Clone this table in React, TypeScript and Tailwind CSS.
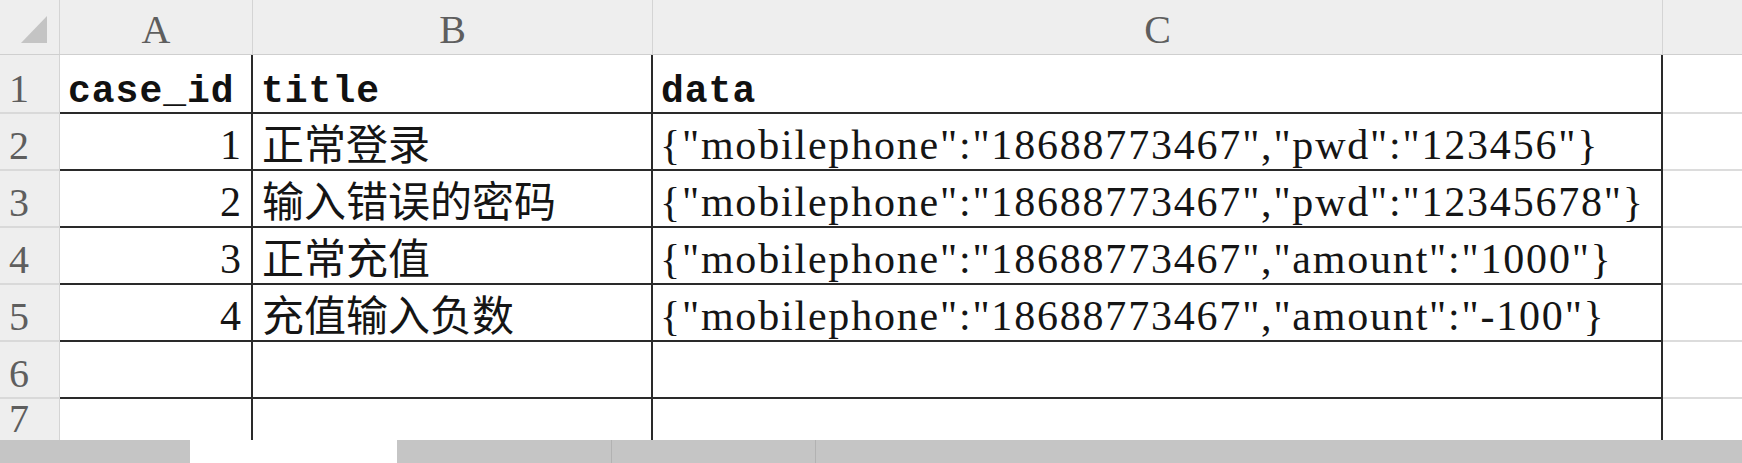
const cols = 'grid grid-cols-[60px_193px_400px_1010px_1fr]'

const rows = [
  { n: '2', id: '1', title: '正常登录', data: '{"mobilephone":"18688773467","pwd":"123456"}' },
  { n: '3', id: '2', title: '输入错误的密码', data: '{"mobilephone":"18688773467","pwd":"12345678"}' },
  { n: '4', id: '3', title: '正常充值', data: '{"mobilephone":"18688773467","amount":"1000"}' },
  { n: '5', id: '4', title: '充值输入负数', data: '{"mobilephone":"18688773467","amount":"-100"}' },
  { n: '6', id: '', title: '', data: '' },
]

const serif = "font-['Liberation_Serif','Noto_Sans_CJK_SC',serif]"
const cjk = "font-['Noto_Sans_CJK_SC','Liberation_Sans',sans-serif]"
const mono = "font-['Liberation_Mono',monospace]"

function RowNum({ n, last }: { n: string; last?: boolean }) {
  return (
    <div
      className={`bg-[#eeeeee] border-r border-[#d4d4d4] ${last ? '' : 'border-b-2 border-b-[#d9d9d9]'} flex items-end pl-[9px] pb-[3px] text-[40px] leading-none text-[#5e5e5e] ${serif}`}
    >
      {n}
    </div>
  )
}

export default function App() {
  return (
    <div className="w-[1742px] h-[463px] overflow-hidden bg-white flex flex-col">
      {/* column letters */}
      <div className={`${cols} h-[55px] shrink-0 bg-[#eeeeee] border-b border-[#cfcfcf]`}>
        <div className="border-r border-[#d4d4d4]">
          <svg width="60" height="54" viewBox="0 0 60 54">
            <polygon points="47,16 47,43 21,43" fill="#c4c4c4" />
          </svg>
        </div>
        {['A', 'B', 'C'].map((c) => (
          <div
            key={c}
            className={`border-r border-[#d4d4d4] flex items-end justify-center pb-[4px] text-[40px] leading-none text-[#5e5e5e] ${serif}`}
          >
            {c}
          </div>
        ))}
        <div />
      </div>

      {/* header row */}
      <div className={`${cols} h-[59px] shrink-0`}>
        <RowNum n="1" />
        <div className={`border-r-2 border-b-2 border-[#2a2a2a] flex items-end pl-[8px] pb-[1px] text-[38px] leading-none tracking-[1px] font-bold text-[#111] ${mono}`}>
          case_id
        </div>
        <div className={`border-r-2 border-b-2 border-[#2a2a2a] flex items-end pl-[8px] pb-[1px] text-[38px] leading-none tracking-[1px] font-bold text-[#111] ${mono}`}>
          title
        </div>
        <div className={`border-r-2 border-b-2 border-[#2a2a2a] flex items-end pl-[8px] pb-[1px] text-[38px] leading-none tracking-[1px] font-bold text-[#111] ${mono}`}>
          data
        </div>
        <div className="border-b-2 border-[#dcdcdc]" />
      </div>

      {rows.map((r) => (
        <div key={r.n} className={`${cols} h-[57px] shrink-0`}>
          <RowNum n={r.n} />
          <div className={`border-r-2 border-b-2 border-[#2a2a2a] flex items-end justify-end pr-[10px] pb-[3px] text-[42px] leading-none text-[#151515] ${serif}`}>
            {r.id}
          </div>
          <div className={`border-r-2 border-b-2 border-[#2a2a2a] flex items-end pl-[9px] pb-[6px] text-[42px] leading-none text-[#151515] ${cjk}`}>
            {r.title}
          </div>
          <div className={`border-r-2 border-b-2 border-[#2a2a2a] flex items-end pl-[7px] pb-[3px] text-[42px] leading-none tracking-[1.8px] whitespace-nowrap text-[#151515] ${serif}`}>
            {r.data}
          </div>
          <div className="border-b-2 border-[#dcdcdc]" />
        </div>
      ))}

      {/* row 7, cut by the sheet tabs */}
      <div className={`${cols} flex-1 min-h-0`}>
        <RowNum n="7" last />
        <div className="border-r-2 border-[#2a2a2a]" />
        <div className="border-r-2 border-[#2a2a2a]" />
        <div className="border-r-2 border-[#2a2a2a]" />
        <div />
      </div>

      {/* sheet tab bar */}
      <div className="h-[23px] shrink-0 flex bg-[#c5c5c5]">
        <div className="w-[190px]" />
        <div className="w-[207px] bg-white" />
        <div className="w-[215px] border-r border-[#b2b2b2]" />
        <div className="w-[204px] border-r border-[#b2b2b2]" />
        <div className="flex-1" />
      </div>
    </div>
  )
}
